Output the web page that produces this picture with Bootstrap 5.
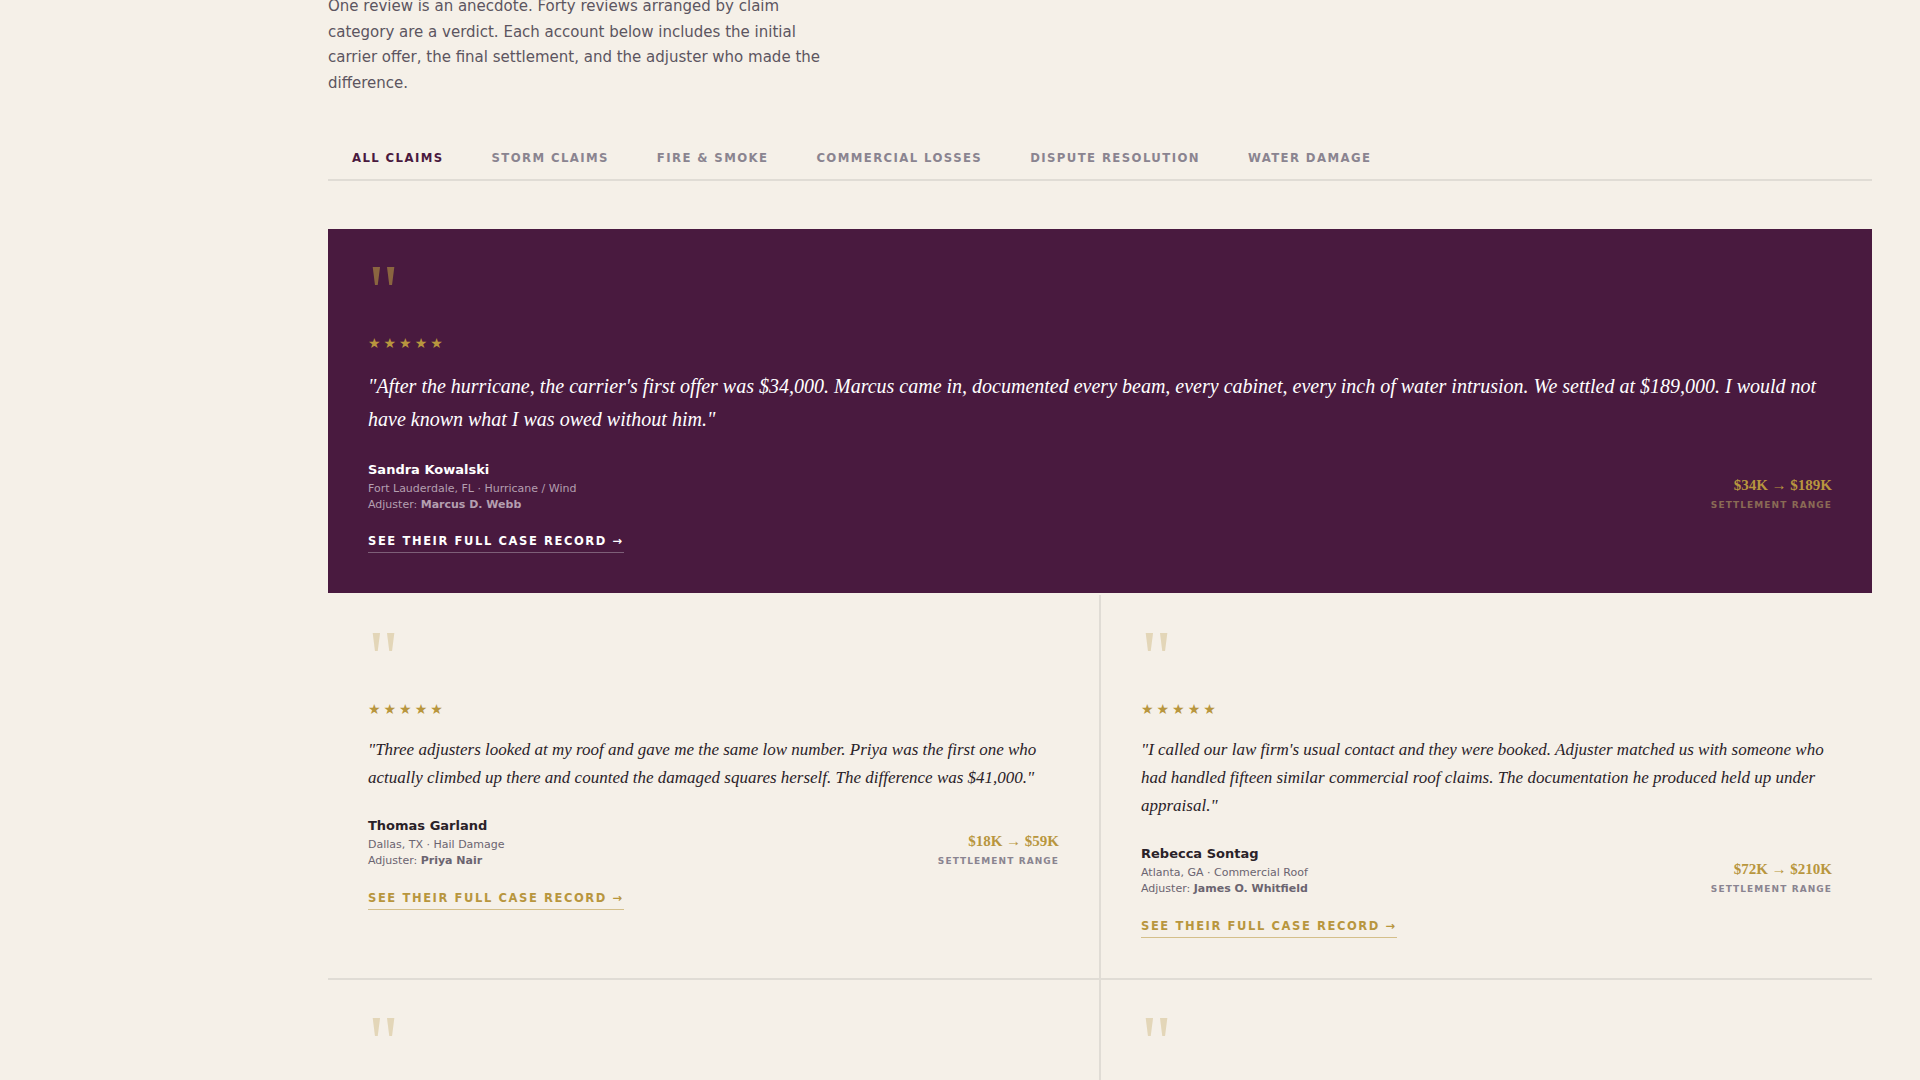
<!DOCTYPE html>
<html lang="en">

<head>
  <meta charset="UTF-8" />
  <meta name="viewport" content="width=device-width, initial-scale=1.0" />
  <title>Claim Reviews</title>

  <link href="https://cdn.jsdelivr.net/npm/bootstrap@5.3.3/dist/css/bootstrap.min.css" rel="stylesheet" />

  <style>
    html, body {
      height: 1080px;
      overflow: hidden;
    }

    body {
      background-color: #f5f0e8;
      color: #2a2228;
      font-family: "DejaVu Sans", sans-serif;
    }

    .page {
      padding: 0 48px 0 328px;
    }

    .intro {
      width: 500px;
      margin: -6px 0 0;
      font-size: 15px;
      line-height: 25.5px;
      color: #5c5560;
    }

    /* Claim category tabs */
    .claim-tabs {
      margin-top: 39px;
      margin-bottom: 48px;
      border-bottom: 2px solid #e0dcd5;
    }

    .claim-tabs .nav-link {
      padding: 13px 24px 11px;
      font-size: 11.7px;
      font-weight: 700;
      line-height: 20px;
      letter-spacing: 0.12em;
      text-transform: uppercase;
      color: #8a8490;
    }

    .claim-tabs .nav-link.active {
      color: #4a1a3f;
    }

    /* Review cards */
    .review {
      padding: 40px;
      background-color: #f5f0e8;
    }

    .feature {
      background-color: #491a3f;
      color: #fff;
      margin-bottom: 2px;
    }

    .review-grid {
      grid-template-columns: 1fr 1fr;
      gap: 2px;
      background-color: #e0dcd5;
    }

    .review-stub {
      min-height: 100px;
    }

    .quote-mark {
      height: 41px;
      margin-bottom: 24px;
      font-family: "Liberation Serif", serif;
      font-size: 76px;
      line-height: 44px;
      color: #e3d6b8;
    }

    .feature .quote-mark {
      color: #8a6540;
    }

    .stars {
      margin-bottom: 18px;
      font-size: 14px;
      line-height: 18px;
      letter-spacing: 3px;
      color: #b8963e;
    }

    .quote {
      margin-bottom: 24px;
      font-family: "Liberation Serif", serif;
      font-style: italic;
      font-size: 17px;
      line-height: 28px;
    }

    .feature .quote {
      font-size: 20px;
      line-height: 33px;
    }

    .name {
      margin-bottom: 1px;
      font-size: 13px;
      font-weight: 700;
      line-height: 20px;
    }

    .meta {
      font-size: 11px;
      line-height: 16px;
      color: #6b6470;
    }

    .feature .meta {
      color: #b49fb0;
    }

    .range {
      font-family: "Liberation Serif", serif;
      font-weight: 700;
      font-size: 15px;
      line-height: 20px;
      color: #b8963e;
    }

    .range-label {
      margin-top: 2px;
      font-size: 9px;
      font-weight: 700;
      letter-spacing: 0.12em;
      line-height: 16px;
      color: #8a8490;
    }

    .feature .range-label {
      color: #8a6a55;
    }

    .case-link {
      display: inline-block;
      margin-top: 20px;
      padding-bottom: 2px;
      font-size: 11.5px;
      font-weight: 700;
      letter-spacing: 0.14em;
      line-height: 18px;
      text-decoration: none;
      text-transform: uppercase;
      color: #b8963e;
      border-bottom: 1px solid #d4bf8a;
    }

    .feature .case-link {
      margin-top: 19px;
      color: #fff;
      border-bottom-color: #7d5f78;
    }
  </style>
</head>

<body>
  <div class="page">
    <p class="intro">One review is an anecdote. Forty reviews arranged by claim category are a verdict. Each account below includes the initial carrier offer, the final settlement, and the adjuster who made the difference.</p>

    <ul class="nav claim-tabs">
      <li class="nav-item"><a class="nav-link active" href="#">All Claims</a></li>
      <li class="nav-item"><a class="nav-link" href="#">Storm Claims</a></li>
      <li class="nav-item"><a class="nav-link" href="#">Fire &amp; Smoke</a></li>
      <li class="nav-item"><a class="nav-link" href="#">Commercial Losses</a></li>
      <li class="nav-item"><a class="nav-link" href="#">Dispute Resolution</a></li>
      <li class="nav-item"><a class="nav-link" href="#">Water Damage</a></li>
    </ul>

    <!-- Featured review -->
    <div class="review feature">
      <div class="quote-mark">"</div>
      <div class="stars">★★★★★</div>
      <p class="quote">"After the hurricane, the carrier's first offer was $34,000. Marcus came in, documented every beam, every cabinet, every inch of water intrusion. We settled at $189,000. I would not have known what I was owed without him."</p>
      <div class="d-flex justify-content-between align-items-end">
        <div>
          <div class="name">Sandra Kowalski</div>
          <div class="meta">Fort Lauderdale, FL · Hurricane / Wind</div>
          <div class="meta">Adjuster: <strong>Marcus D. Webb</strong></div>
        </div>
        <div class="text-end">
          <div class="range">$34K → $189K</div>
          <div class="range-label">SETTLEMENT RANGE</div>
        </div>
      </div>
      <a class="case-link" href="#">See their full case record →</a>
    </div>

    <!-- Review grid -->
    <div class="d-grid review-grid">
      <div class="review">
        <div class="quote-mark">"</div>
        <div class="stars">★★★★★</div>
        <p class="quote">"Three adjusters looked at my roof and gave me the same low number. Priya was the first one who actually climbed up there and counted the damaged squares herself. The difference was $41,000."</p>
        <div class="d-flex justify-content-between align-items-end">
          <div>
            <div class="name">Thomas Garland</div>
            <div class="meta">Dallas, TX · Hail Damage</div>
            <div class="meta">Adjuster: <strong>Priya Nair</strong></div>
          </div>
          <div class="text-end">
            <div class="range">$18K → $59K</div>
            <div class="range-label">SETTLEMENT RANGE</div>
          </div>
        </div>
        <a class="case-link" href="#">See their full case record →</a>
      </div>
      <div class="review">
        <div class="quote-mark">"</div>
        <div class="stars">★★★★★</div>
        <p class="quote">"I called our law firm's usual contact and they were booked. Adjuster matched us with someone who had handled fifteen similar commercial roof claims. The documentation he produced held up under appraisal."</p>
        <div class="d-flex justify-content-between align-items-end">
          <div>
            <div class="name">Rebecca Sontag</div>
            <div class="meta">Atlanta, GA · Commercial Roof</div>
            <div class="meta">Adjuster: <strong>James O. Whitfield</strong></div>
          </div>
          <div class="text-end">
            <div class="range">$72K → $210K</div>
            <div class="range-label">SETTLEMENT RANGE</div>
          </div>
        </div>
        <a class="case-link" href="#">See their full case record →</a>
      </div>
      <div class="review review-stub">
        <div class="quote-mark">"</div>
      </div>
      <div class="review review-stub">
        <div class="quote-mark">"</div>
      </div>
    </div>
  </div>

  <script src="https://cdn.jsdelivr.net/npm/bootstrap@5.3.3/dist/js/bootstrap.bundle.min.js"></script>
</body>

</html>
